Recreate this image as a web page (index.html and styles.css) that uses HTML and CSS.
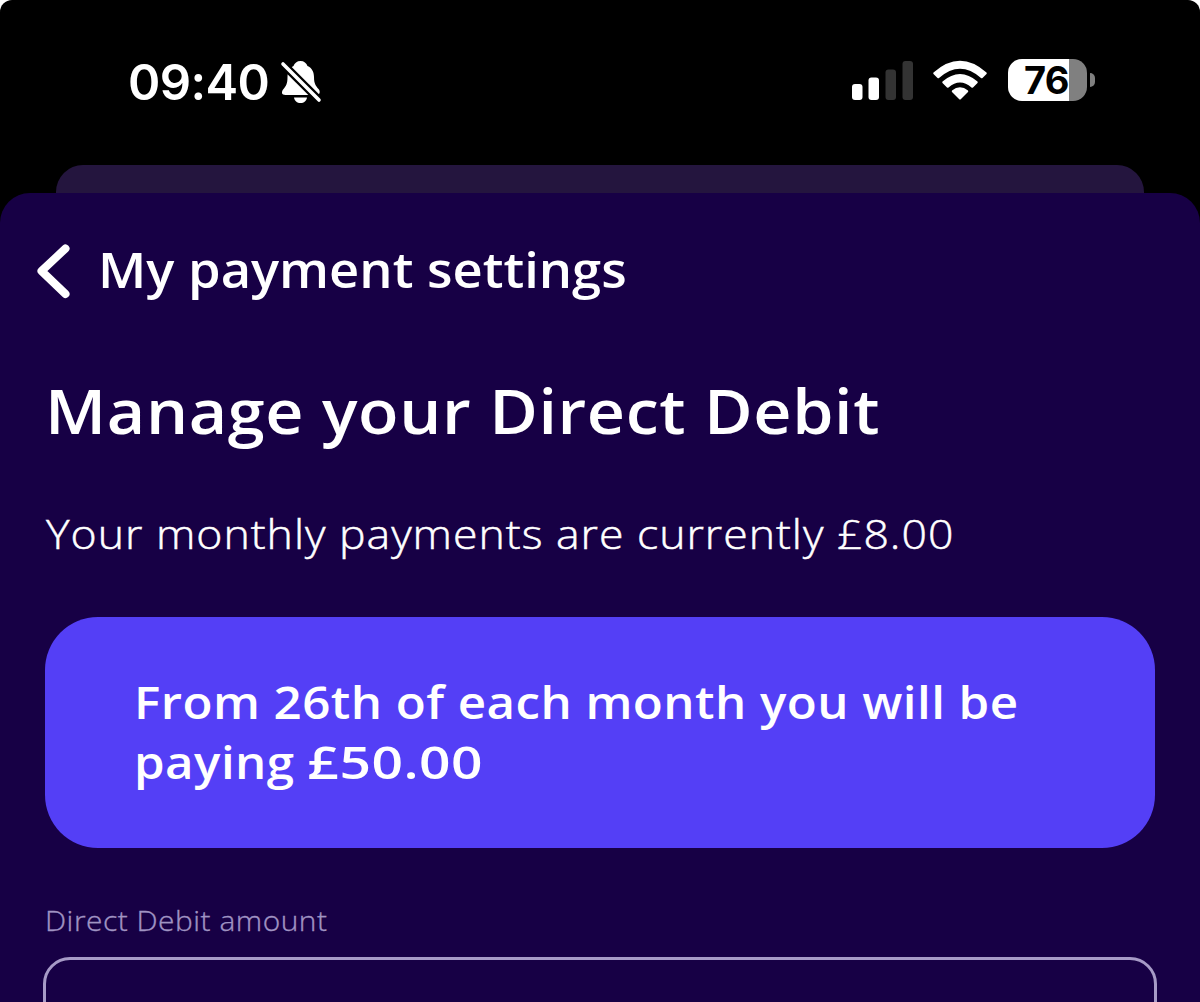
FILE: index.html
```
<!DOCTYPE html>
<html lang="en">
<head>
<meta charset="utf-8">
<title>My payment settings</title>
<link rel="stylesheet" href="styles.css">
</head>
<body>
<div class="phone">
  <header class="status">
    <span class="time">09:40</span>
    <svg class="bell" width="42" height="46" viewBox="0 0 42 46">
      <path fill="#fff" d="M20.500 2C24 2 26.500 4 27.500 7C32 9 34 13 34 18C34 25 36 27 38.500 30C41 33 39.500 36 36 36H5.500C1.500 36 1 33 3.500 30C6 27 7.500 25 7.500 18C7.500 13 10 9 13.500 7C14.500 4 17 2 20.500 2Z"/>
      <path fill="#fff" d="M14 38.500H27C26.500 42 24 44 20.500 44S14.500 42 14 38.500Z"/>
      <path stroke="#000" stroke-width="8" d="M-1 1L42 44"/>
      <path stroke="#fff" stroke-width="3.600" stroke-linecap="round" d="M3 5L39 41"/>
    </svg>
    <div class="indicators">
      <svg class="signal" width="62" height="40" viewBox="0 0 62 40">
        <rect x="1" y="24" width="10.500" height="16" rx="3" fill="#fff"/>
        <rect x="17.500" y="17.500" width="10.500" height="22.500" rx="3" fill="#fff"/>
        <rect x="34.500" y="9.500" width="10.500" height="30.500" rx="3" fill="#333"/>
        <rect x="51.500" y="1" width="10.500" height="39" rx="3" fill="#333"/>
      </svg>
      <svg class="wifi" width="56" height="42" viewBox="0 0 56 42" fill="#fff">
        <path d="M1.500 12.500Q28-11 54.500 12.500Q55 13.500 54.500 14L50.500 18Q49.500 18.500 49 18Q28-.500 7 18Q6.500 18.500 5.500 18L1.500 14Q1 13.500 1.500 12.500Z"/>
        <path d="M10.500 21.500Q28 6.500 45.500 21.500Q46 22.500 45.500 23L41 27.500Q40 28 39.500 27.500Q28 17.500 16.500 27.500Q16 28 15 27.500L10.500 23Q10 22.500 10.500 21.500Z"/>
        <path d="M20 30.500Q28 24 36 30.500Q36.500 31.500 36 32L29 39Q28 40 27 39L20 32Q19.500 31.500 20 30.500Z"/>
      </svg>
      <div class="battery"><span class="level">76</span></div>
      <div class="cap"></div>
    </div>
  </header>
  <div class="behind"></div>
  <main class="sheet">
    <nav class="nav">
      <svg class="back" width="34" height="56" viewBox="0 0 34 56">
        <path d="M29.500 4.500L5.500 27L29.500 50" fill="none" stroke="#fff" stroke-width="8" stroke-linecap="round" stroke-linejoin="round"/>
      </svg>
      <span class="nav-title">My payment settings</span>
    </nav>
    <h1 class="heading">Manage your Direct Debit</h1>
    <p class="summary">Your monthly payments are currently £8.00</p>
    <section class="card">
      <div class="notice">From 26th of each month you will be</div>
      <div class="notice">paying <span class="amount">£50.00</span></div>
    </section>
    <label class="label">Direct Debit amount</label>
    <div class="field"></div>
  </main>
</div>
</body>
</html>
```
FILE: styles.css
```
* { box-sizing: border-box; }
body { margin: 0; background: #fff; overflow: hidden; }
.phone {
  width: 1200px;
  height: 1002px;
  overflow: hidden;
  background: #000;
  border-radius: 12px 12px 0 0;
  color: #fff;
  font-family: "Open Sans", "Noto Sans", sans-serif;
  white-space: nowrap;
}
.status {
  height: 165px;
  display: flex;
  align-items: flex-start;
  padding: 59px 105px 0 127px;
  font-family: Inter, sans-serif;
}
.time {
  width: 153px;
  padding-left: 1px;
  font-size: 49px;
  font-weight: 600;
  line-height: 47px;
  letter-spacing: -0.6px;
}
.indicators { display: flex; align-items: flex-start; margin-left: auto; }
.signal { margin-top: 1px; }
.wifi { margin: 1px 0 0 19px; }
.battery {
  width: 79px;
  height: 42px;
  margin-left: 20px;
  border-radius: 14px;
  background: linear-gradient(90deg, #fff 61px, #808080 61px);
}
.level {
  display: block;
  padding-left: 16px;
  color: #000;
  font-size: 38px;
  font-weight: 700;
  line-height: 43px;
  letter-spacing: -0.8px;
}
.cap { width: 5px; height: 14px; margin: 14px 0 0 3px; border-radius: 0 6px 6px 0; background: #808080; }
.behind { height: 28px; margin: 0 56px; border-radius: 27px 27px 0 0; background: #24153e; }
.sheet {
  height: 809px;
  border-radius: 30px 30px 0 0;
  background: #170045;
  padding: 46px 43px 0 45px;
  display: flex;
  flex-direction: column;
}
.sheet > * { flex-shrink: 0; }
.nav-title, .heading, .summary, .notice, .label, .amount { transform-origin: 0 50%; }
.nav { display: flex; height: 60px; margin-left: -9px; }
.back { margin: 5px 28px 0 0; }
.nav-title { font-size: 49px; font-weight: 600; line-height: 60px; transform: scaleX(1.07); }
.heading { margin: 71px 0 0; font-size: 62px; font-weight: 600; line-height: 80px; letter-spacing: 0.6px; transform: scaleX(1.07); }
.summary {
  margin: 53px 0 0 1px;
  font-size: 41px;
  font-weight: 300;
  line-height: 60px;
  letter-spacing: 0.9px;
  -webkit-text-stroke: 0.5px #fff;
  transform: scaleX(1.088);
}
.card {
  width: 1110px;
  height: 231px;
  margin-top: 54px;
  padding: 54px 89px 0;
  border-radius: 53px;
  background: #543ff6;
}
.notice { font-size: 46px; font-weight: 600; line-height: 60px; letter-spacing: 0.43px; transform: scaleX(1.07); }
.amount { display: inline-block; transform: scaleX(1.12); }
.label {
  margin-top: 52px;
  color: #a094c3;
  font-size: 28px;
  font-weight: 300;
  line-height: 40px;
  letter-spacing: 0.5px;
  -webkit-text-stroke: 0.35px #a094c3;
  transform: scaleX(1.066);
}
.field { height: 90px; margin: 17px 0 0 -2px; border: 3px solid #a79bc7; border-radius: 27px; }
```
